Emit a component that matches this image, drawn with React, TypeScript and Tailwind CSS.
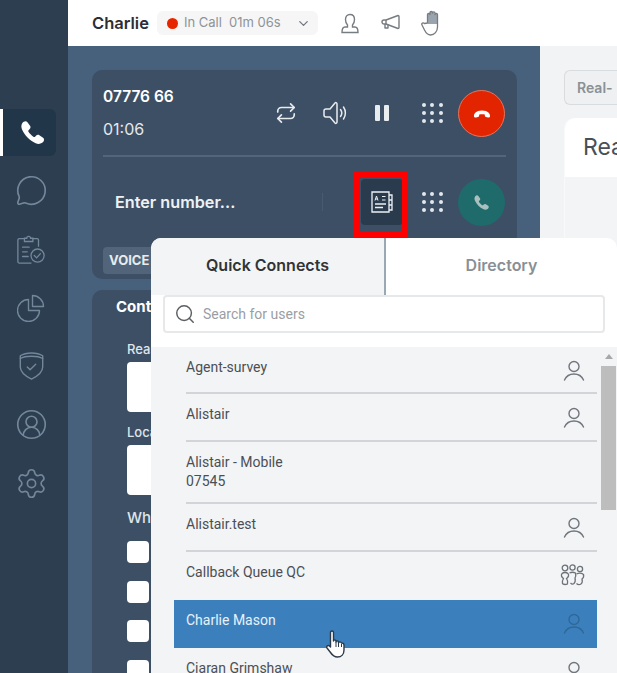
import React from "react";
import { ChevronDown, Repeat, MessageCircle, CircleUserRound, Settings, Search } from "lucide-react";

function Dots() {
  return (
    <div className="grid w-[21px] grid-cols-3 gap-[4px]">
      {[0, 1, 2, 3, 4, 5, 6, 7, 8].map((i) => (
        <span key={i} className="h-[4px] w-[4px] rounded-full bg-[#e4e8ec]" />
      ))}
    </div>
  );
}

function PhoneGlyph({ size, color }: { size: number; color: string }) {
  return (
    <svg width={size} height={size} viewBox="0 0 24 24">
      <path
        fill={color}
        d="M3 3.600C4.200 1.800 6.400 1.300 7.500 2.800l2.300 3.300c.7 1 .5 2-.3 2.800l-1 1c-.4.400-.4.800-.2 1.200 1 1.700 2.700 3.500 4.800 4.800.4.200.8.200 1.200-.2l1-1c.8-.8 1.800-1 2.800-.3l3.300 2.300c1.500 1.100 1 3.300-.8 4.500-1.800 1.200-3.800 1.300-5.800.3C9.500 19 5 14.500 2.800 9.500 1.900 7.500 1.800 5.400 3 3.600z"
      />
    </svg>
  );
}

function UserIcon({ color = "#70767c" }: { color?: string }) {
  return (
    <svg width="22" height="22" viewBox="0 0 22 22" fill="none" stroke={color} strokeWidth="1.400" strokeLinecap="round">
      <circle cx="11" cy="6.500" r="5" />
      <path d="M1.500 20C3.500 15.500 7 14 11 14s7.500 1.500 9.500 6" />
    </svg>
  );
}

function GroupIcon() {
  return (
    <svg width="25" height="23" viewBox="0 0 25 23" fill="none" stroke="#6c7277" strokeWidth="1.300">
      <circle cx="5" cy="4" r="2.800" />
      <circle cx="12.500" cy="3.500" r="2.600" />
      <circle cx="20" cy="5" r="2.600" />
      <path d="M5 8.500c-2.500 0-4 1.500-3.500 3.500.3 1.200 1.500 2 2 2.500-1 1.500-1.500 3-1 5 .3 1.300 5 1.300 5 0 .5-2 0-3.500-1-5 .5-.5 1.700-1.300 2-2.500C9 10 7.500 8.500 5 8.500z" />
      <path d="M9.500 9c2-1 4-1 6 0 .5 2 .3 3.500-.5 5 .5 2 .5 4-1 5.500-1 .8-2.500.5-3.500-.5" />
      <path d="M16.500 10c2-1 5-1 7 .5.5 2 0 3.500-1.500 4.500.5 2 .5 4-1 5-1.500 1-3.500.5-4.500-.5" />
    </svg>
  );
}

function Row({ name, sub, icon, h }: { name: string; sub?: string; icon?: boolean; h: string }) {
  return (
    <div className={`ml-[12px] flex justify-between border-b-2 border-[#d2d4d7] pr-[12px] ${h}`}>
      <div className="pt-[11px] text-[14px] leading-[19px] text-[#4b4f54]">
        <div>{name}</div>
        {sub && <div>{sub}</div>}
      </div>
      {icon && (
        <div className="pt-[13px]">
          <UserIcon />
        </div>
      )}
    </div>
  );
}

const navClass = "flex h-[58.500px] w-[62px] items-center justify-center text-[#73879b]";

export default function App() {
  return (
    <div className="relative flex h-[673px] w-[617px] overflow-hidden bg-white font-['Inter',sans-serif]">
      {/* Sidebar */}
      <aside className="flex w-[68px] shrink-0 flex-col bg-[#2c3e50] pt-[103px]">
        <div className="flex h-[58.500px] w-[56px] items-center">
          <div className="flex h-[47px] w-[56px] items-center justify-center rounded-r-[6px] border-l-[3px] border-white bg-[#22364a] pl-[6px]">
            <PhoneGlyph size={27} color="#ffffff" />
          </div>
        </div>
        <div className={navClass}>
          <MessageCircle size={33} strokeWidth={1.200} />
        </div>
        <div className={navClass}>
          <svg width="30" height="30" viewBox="0 0 30 32" fill="none" stroke="currentColor" strokeWidth="1.400" strokeLinecap="round">
            <path d="M8 5H2.500A1.500 1.500 0 0 0 1 6.500v23A1.500 1.500 0 0 0 2.500 31H15" />
            <path d="M23 13V6.500A1.500 1.500 0 0 0 21.500 5H17" />
            <path d="M8 8V4.500h2.500a2 2 0 0 1 4 0H17V8H8z" />
            <path d="M6 14h7M6 19h5M6 24h6" />
            <circle cx="22" cy="23" r="7" />
            <path d="M18.500 23l2.500 2.500 4-4.500" />
          </svg>
        </div>
        <div className={navClass}>
          <svg width="28" height="28" viewBox="0 0 28 28" fill="none" stroke="currentColor" strokeWidth="1.400" strokeLinejoin="round">
            <path d="M11.500 5.500A11 11 0 1 0 22.500 16.500H11.500z" />
            <path d="M15.500 1.500a11 11 0 0 1 11 11h-11z" />
          </svg>
        </div>
        <div className={navClass}>
          <svg width="25" height="28" viewBox="0 0 26 30" fill="none" stroke="currentColor" strokeWidth="1.500" strokeLinecap="round" strokeLinejoin="round">
            <path d="M1 4c3-2 7-3 12-3s9 1 12 3v12c0 6-6 10-12 13C7 26 1 22 1 16V4z" />
            <path d="M1 7c3-2 7-2.500 12-2.500S22 5 25 7" />
            <path d="M8.500 16l3 3 6-6" />
          </svg>
        </div>
        <div className={navClass}>
          <CircleUserRound size={33} strokeWidth={1.200} />
        </div>
        <div className={navClass}>
          <Settings size={33} strokeWidth={1.200} />
        </div>
      </aside>

      <div className="flex min-w-0 flex-1 flex-col">
        {/* Header */}
        <header className="flex h-[46px] shrink-0 items-center pl-[24px]">
          <span className="w-[65px] text-[16.500px] font-semibold text-[#2a2f35]">Charlie</span>
          <div className="flex h-[24px] w-[161px] items-center rounded-[6px] bg-[#f6f6f6] pl-[10px] text-[13px] text-[#8e9398]">
            <span className="h-[11px] w-[11px] rounded-full bg-[#e62600]" />
            <span className="ml-[6px] w-[45px]">In Call</span>
            <span className="w-[67px]">01m 06s</span>
            <ChevronDown size={15} className="text-[#70767c]" />
          </div>
          <div className="ml-[23px] text-[#777c80]">
            <svg width="18" height="21" viewBox="0 0 18 21" fill="none" stroke="currentColor" strokeWidth="1.400">
              <path d="M9 1.500c-3 0-4.500 2.300-4.500 5 0 2.500 1 4.500 2 5.500v2H4C2 14 1 16 1 19.500h16c0-3.500-1-5.500-3-5.500h-2.500v-2c1-1 2-3 2-5.500 0-2.700-1.500-5-4.500-5z" />
            </svg>
          </div>
          <div className="ml-[22px] text-[#777c80]">
            <svg width="20" height="18" viewBox="0 0 20 18" fill="none" stroke="currentColor" strokeWidth="1.400" strokeLinejoin="round">
              <path d="M5 6l12-4.500c.5 0 1 .3 1 1v11c0 .7-.5 1-1 1L5 10H3c-1 0-2-.8-2-2s1-2 2-2h2z" />
              <path d="M5 6v4M4 10v4h3v-3" />
            </svg>
          </div>
          <div className="ml-[20px] text-[#777c80]">
            <svg width="22" height="26" viewBox="0 0 22 26" fill="none" stroke="currentColor" strokeWidth="1.300" strokeLinejoin="round">
              <path fill="#9aa4ae" stroke="none" d="M7 4c0-1 2-1 2 0V2c0-1 2-1 2 0v1c0-1 2-1 2 0v1c0-1 3-1 3 0v10H7z" />
              <path d="M6.500 13V4.500c0-1.500 2.500-1.500 2.500 0V2.500C9 1 11.500 1 11.500 2.500V3c0-1.500 2.500-1.500 2.500 0v1.500c0-1.500 2.500-1.500 2.500 0V17c0 4.500-3 8-7 8-3 0-4.500-2-6-5L1 15c-.8-1.500 1-3 2.500-1.500z" />
            </svg>
          </div>
        </header>

        <div className="flex min-h-0 flex-1">
          {/* Middle panel */}
          <main className="flex w-[472px] shrink-0 flex-col gap-[11px] overflow-hidden bg-[#47617c] pl-[24px] pt-[24px]">
            <section className="h-[209px] w-[425px] shrink-0 rounded-[10px] bg-[#3d4f65] px-[11px]">
              <div className="flex h-[87px] items-center border-b-2 border-[#52657a] pt-[1px]">
                <div className="w-[172px] text-[15.500px] leading-[32px] text-white">
                  <div className="font-semibold">07776 66</div>
                  <div className="text-[16px] text-[#e4e8ec]">01:06</div>
                </div>
                <Repeat size={22} strokeWidth={1.800} className="text-[#e8ecef]" />
                <svg width="26" height="26" viewBox="0 0 26 26" fill="none" stroke="#e8ecef" strokeWidth="1.500" strokeLinejoin="round" strokeLinecap="round" className="ml-[25px]">
                  <path d="M4 9h4l5-6c1-1 2 0 2 1v18c0 1-1 2-2 1l-5-6H4c-1.500 0-2-1-2-2v-4c0-1 .5-2 2-2z" />
                  <path d="M18.500 9.500c1.500 2 1.500 5 0 7M21.500 7c2.500 3.500 2.500 8.500 0 12" />
                </svg>
                <div className="ml-[27px] flex gap-[4px]">
                  <span className="h-[16px] w-[5px] rounded-[1px] bg-[#e8ecef]" />
                  <span className="h-[16px] w-[5px] rounded-[1px] bg-[#e8ecef]" />
                </div>
                <div className="ml-[33px]">
                  <Dots />
                </div>
                <div className="ml-[15px] flex h-[47px] w-[47px] items-center justify-center rounded-full border border-[#e8735a] bg-[#e22500]">
                  <svg width="18" height="9" viewBox="0 0 18 9">
                    <path fill="#fff" d="M1 7.500C.500 5 3 1.500 9 1.500S17.500 5 17 7.500c-.2 1-1 1.200-2 1l-2-.5c-1-.2-1.200-1-1.200-2.500C10 5 8 5 6.200 5.500 6.200 7 6 7.800 5 8l-2 .5c-1 .2-1.800 0-2-1z" />
                  </svg>
                </div>
              </div>
              <div className="flex h-[90px] items-center">
                <span className="ml-[12px] w-[207px] text-[16.200px] font-semibold text-[#eef1f4]">Enter number...</span>
                <span className="h-[18px] w-px bg-[#485a70]" />
                <div className="ml-[38px] flex h-[46px] w-[42px] items-center justify-center rounded-[4px] bg-[#2a3b4e]">
                  <svg width="24" height="24" viewBox="0 0 24 24" fill="none" stroke="#eef1f4" strokeWidth="1.300">
                    <path d="M2 2h17v20H2z" />
                    <path d="M19 5h3v5h-3M19 10h3v5h-3M19 15h3v5h-3" />
                    <path d="M5 14h11M5 17.500h8" />
                    <path d="M5 10.500l1.500-4.500 1.500 4.500M5.500 9h2M12 6.500h3.500M12 10h3.500" strokeWidth="1" />
                  </svg>
                </div>
                <div className="ml-[19px]">
                  <Dots />
                </div>
                <div className="ml-[15px] flex h-[47px] w-[47px] items-center justify-center rounded-full bg-[#1f6b6c]">
                  <PhoneGlyph size={17} color="#a9c0bf" />
                </div>
              </div>
              <div className="flex h-[27px] w-[70px] items-center rounded-[4px] bg-[#52647a] pl-[6px] text-[13px] font-bold text-[#e8ecef]">VOICE</div>
            </section>

            <section className="w-[425px] flex-1 rounded-t-[10px] bg-[#3d4f65] pl-[24px] pr-[11px] pt-[7px]">
              <div className="text-[15px] font-bold leading-[20px] text-white">Contact</div>
              <div className="pl-[11px] text-[13px] font-medium text-[#dfe5ea]">
                <div className="mt-[25px] leading-[15px]">Reason</div>
                <div className="mt-[5px] h-[50px] rounded-[4px] bg-white" />
                <div className="mt-[13px] leading-[15px]">Location</div>
                <div className="mt-[5px] h-[50px] rounded-[4px] bg-white" />
                <div className="mt-[14px] text-[15px] leading-[17px]">Where</div>
                <div className="mt-[15px] flex flex-col gap-[17.500px]">
                  {[0, 1, 2, 3].map((i) => (
                    <span key={i} className="h-[22px] w-[22px] rounded-[4px] bg-white" />
                  ))}
                </div>
              </div>
            </section>
          </main>

          {/* Right panel */}
          <div className="min-w-0 flex-1 bg-[#f2f3f4] pl-[24px] pt-[24px]">
            <div className="flex h-[35px] items-center rounded-l-[6px] border border-r-0 border-[#d8dcde] bg-[#eef0f1] pl-[12px] text-[14px] font-semibold whitespace-nowrap text-[#8a9096]">
              Real-
            </div>
            <div className="mt-[13px] h-[140px] rounded-tl-[10px] border-l border-[#f8f9f9] bg-[#f3f4f5]">
              <div className="h-[59px] overflow-hidden rounded-tl-[10px] bg-white pl-[18px] pt-[13px] text-[23px] leading-[32px] text-[#4a4f55]">Rea</div>
            </div>
          </div>
        </div>
      </div>

      {/* Highlight over the button */}
      <div className="absolute left-[353px] top-[171px] h-[66px] w-[55px] border-[6px] border-[#ff0000]" />

      {/* Popover */}
      <div className="absolute bottom-0 left-[151px] right-0 top-[238px] overflow-hidden rounded-t-[10px] bg-white">
        <div className="flex h-[57px]">
          <div className="flex w-[235px] items-center justify-center border-r-2 border-[#9aa7b4] bg-[#f3f4f6] pb-[3px] text-[16px] font-semibold text-[#2f3439]">Quick Connects</div>
          <div className="flex flex-1 items-center justify-center pb-[3px] text-[16px] font-semibold text-[#8a8f94]">Directory</div>
        </div>
        <div className="h-[52px] pl-[12px] pr-[12px]">
          <div className="flex h-[38px] items-center gap-[7px] rounded-[4px] border-2 border-[#e6e8ea] pl-[9px] font-['Roboto',sans-serif] text-[14px] text-[#9a9ea3]">
            <Search size={22} strokeWidth={1.600} className="text-[#5b5f63]" />
            Search for users
          </div>
        </div>
        <div className="flex h-[326px] bg-[#f3f4f6] font-['Roboto',sans-serif]">
          <div className="w-[446px] shrink-0 overflow-hidden pl-[23px]">
            <Row name="Agent-survey" icon h="h-[47px]" />
            <Row name="Alistair" icon h="h-[48px]" />
            <Row name="Alistair - Mobile" sub="07545" h="h-[62px]" />
            <Row name="Alistair.test" icon h="h-[48px]" />
            <div className="ml-[12px] flex h-[48px] justify-between pr-[12px]">
              <div className="pt-[11px] text-[14px] leading-[19px] text-[#4b4f54]">Callback Queue QC</div>
              <div className="pt-[12px]">
                <GroupIcon />
              </div>
            </div>
            <div className="flex h-[48px] justify-between bg-[#3b80bd] px-[12px]">
              <div className="pt-[11px] text-[14px] leading-[19px] text-[#e8f1f8]">Charlie Mason</div>
              <div className="pt-[13px]">
                <UserIcon color="#2f6797" />
              </div>
            </div>
            <Row name="Ciaran Grimshaw" icon h="h-[48px]" />
          </div>
          <div className="flex flex-1 flex-col items-center pl-[3px] pt-[7px]">
            <span className="h-0 w-0 border-x-[4px] border-b-[5px] border-x-transparent border-b-[#a6a8aa]" />
            <span className="mt-[7px] h-[144px] w-[15px] bg-[#bdbdbd]" />
          </div>
        </div>
      </div>

      {/* Mouse cursor */}
      <svg width="20" height="29" viewBox="0 0 20 29" className="absolute left-[326px] top-[630px]" fill="#ffffff" stroke="#2c3a48" strokeWidth="1.400" strokeLinejoin="round">
        <path d="M4.500 2.500c0-2 3-2 3 0V11c0-1.500 2.500-1.500 2.500 0v1c0-1.500 2.500-1.500 2.500 0v1c0-1.500 2.500-1.500 3 0 .5 0 2.500 0 2.500 2v5c0 4-2.500 7-6.500 7-3.500 0-5-1.500-7-4.500L1 18c-1-1.500 1-3.500 2.500-2l1 1z" />
        <path d="M10 12v5M12.500 13v4M15.500 14v3" fill="none" strokeWidth="1" />
      </svg>
    </div>
  );
}
